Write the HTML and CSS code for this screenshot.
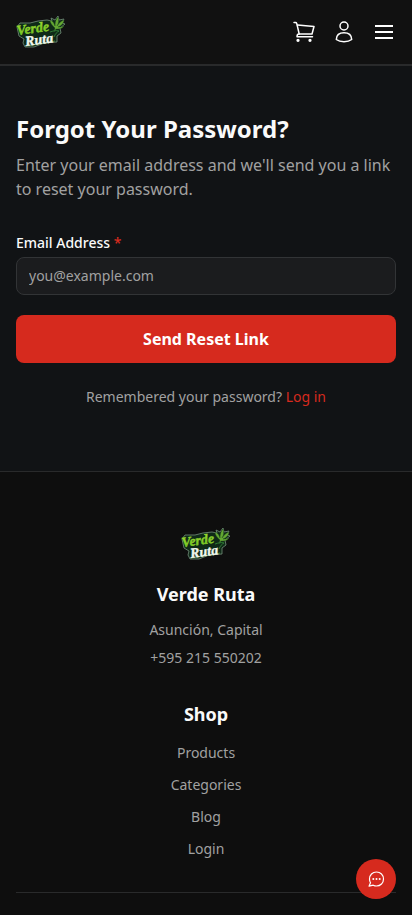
FILE: index.html
```html
<!DOCTYPE html>
<html lang="en">
<head>
<meta charset="utf-8">
<meta name="viewport" content="width=device-width, initial-scale=1">
<title>Forgot Your Password? - Verde Ruta</title>
<link rel="stylesheet" href="styles.css">
</head>
<body>
<svg class="defs" width="0" height="0" aria-hidden="true">
  <defs>
    <linearGradient id="leaf-green" x1="0" y1="0" x2="0" y2="1">
      <stop offset="0" stop-color="#a4dc35"/>
      <stop offset="1" stop-color="#5fbe1c"/>
    </linearGradient>
    <symbol id="logo" viewBox="0 0 50 32">
      <path d="M1 11 4 7 14 7 22 5 31 4 36 5 35 2 39 4 42 0 43 4 48 3 46 7 49 8 44 12 45 17 41 20 41 26 28 27 18 31 9 31 7 27 8 23 3 20Z" fill="#0f2a17" stroke="#75917c" stroke-width=".8" stroke-linejoin="round"/>
      <path d="M39 12C36 9 34 7 34 4c3 1 4 3 5 6 0-4 1-7 3-9 1 3 1 6-1 9 2-3 4-5 7-6 0 3-3 6-6 7 2 0 4 0 6-1-2 3-5 3-8 3l-2 3z" fill="#64a832" stroke="#234f20" stroke-width=".4"/>
      <path d="M34 16c3-1 6-2 9-1-2 1-4 3-5 6" fill="none" stroke="#2f7a35" stroke-width="1"/>
      <path d="M10 30c9-2 19-2 29-5" fill="none" stroke="#4d9a4f" stroke-width=".8"/>
      <g transform="rotate(-8 24 16)">
        <text class="logo-word" x="1" y="16" fill="url(#leaf-green)" stroke="#93d42c">Verde</text>
        <text class="logo-word" x="8" y="28" fill="#f1f7ee" stroke="#f1f7ee">Ruta</text>
      </g>
    </symbol>
  </defs>
</svg>

<header class="header">
  <a href="#" class="logo" aria-label="Verde Ruta"><svg width="50" height="32"><use href="#logo"/></svg></a>
  <nav class="header-nav">
    <a href="#" class="icon-link" aria-label="Cart">
      <svg width="24" height="24" viewBox="0 0 24 24" fill="none" stroke="currentColor" stroke-width="1.5" stroke-linecap="round" stroke-linejoin="round">
        <path d="M2 2.5h1.500c.6 0 1 .3 1.200.9L7.200 14"/>
        <path d="M5.500 5 22 6.500 20 14H7c-1.300 0-2 1-2 2.700h15.500"/>
        <circle cx="6" cy="20.300" r=".9" fill="currentColor"/>
        <circle cx="18" cy="20.300" r=".9" fill="currentColor"/>
      </svg>
    </a>
    <a href="#" class="icon-link" aria-label="Account">
      <svg width="24" height="24" viewBox="0 0 24 24" fill="none" stroke="currentColor" stroke-width="1.5">
        <circle cx="12" cy="6" r="4"/>
        <path d="M4.300 19.500C4.500 15.300 7.500 12.800 12 12.800s7.500 2.500 7.700 6.700c-2 1.500-4.500 2.200-7.700 2.200s-5.700-.7-7.700-2.200Z" stroke-linejoin="round"/>
      </svg>
    </a>
    <button type="button" class="icon-link" aria-label="Menu">
      <svg width="24" height="24" viewBox="0 0 24 24" fill="none" stroke="currentColor" stroke-width="2">
        <path d="M3 6h18M3 12h18M3 18h18"/>
      </svg>
    </button>
  </nav>
</header>

<main class="main">
  <h1 class="title">Forgot Your Password?</h1>
  <p class="intro">Enter your email address and we'll send you a link to reset your password.</p>
  <form class="reset-form">
    <label class="label" for="email">Email Address <span class="required">*</span></label>
    <input class="input" id="email" type="email" placeholder="you@example.com" required>
    <button class="submit" type="submit">Send Reset Link</button>
  </form>
  <p class="login">Remembered your password? <a href="#">Log in</a></p>
</main>

<footer class="footer">
  <svg class="footer-logo" width="50" height="32" role="img" aria-label="Verde Ruta"><use href="#logo"/></svg>
  <h2 class="footer-title">Verde Ruta</h2>
  <ul class="contact">
    <li>Asunción, Capital</li>
    <li>+595 215 550202</li>
  </ul>
  <h2 class="footer-title">Shop</h2>
  <ul class="shop-links">
    <li><a href="#">Products</a></li>
    <li><a href="#">Categories</a></li>
    <li><a href="#">Blog</a></li>
    <li><a href="#">Login</a></li>
  </ul>
  <div class="divider"></div>
</footer>

<button type="button" class="chat" aria-label="Chat">
  <svg width="20" height="20" viewBox="0 0 20 20" fill="none" stroke="currentColor" stroke-width="1.200" stroke-linejoin="round">
    <path d="M10.500 3C14.500 3 17.500 6 17.500 10s-3 7-7 7c-1.200 0-2.300-.3-3.300-.8L3 17.200l1.500-3.400C3.800 12.700 3.500 11.400 3.500 10c0-4 3-7 7-7Z"/>
    <g fill="currentColor" stroke="none"><circle cx="7.300" cy="10" r="1"/><circle cx="10.500" cy="10" r="1"/><circle cx="13.700" cy="10" r="1"/></g>
  </svg>
</button>
</body>
</html>
```
FILE: styles.css
```css
* {
	box-sizing:border-box;
}
body, h1, h2, p, ul {
	margin:0;
	padding:0;
}
body {
	display:flex;
	flex-direction:column;
	min-height:100vh;
	background:#111315;
	color:#fafafa;
	font:14px/20px "Noto Sans", sans-serif;
}
a {
	color:inherit;
	text-decoration:none;
}
ul {
	list-style:none;
}
svg {
	display:block;
}
button {
	border:0;
	font-family:inherit;
	cursor:pointer;
}
.defs {
	position:absolute;
}
.logo-word {
	font:italic 700 14px "Liberation Serif", serif;
	stroke-width:.4px;
}

/* header */
.header {
	display:flex;
	align-items:center;
	justify-content:space-between;
	height:66px;
	padding:0 16px;
	background:#111;
	border-bottom:2px solid #292a2b;
}
.header-nav {
	display:flex;
	gap:16px;
}
.icon-link {
	padding:0;
	background:none;
	color:#fff;
}

/* reset form */
.main {
	padding:47px 16px 64px;
}
.title {
	margin-bottom:8px;
	font-size:24px;
	line-height:32px;
}
.intro {
	margin-bottom:32px;
	color:#a1a1a1;
	font-size:16px;
	line-height:24px;
}
.label {
	display:block;
	margin-bottom:4px;
	font-weight:500;
}
.required {
	color:#d92b1f;
}
.input {
	display:block;
	width:100%;
	height:38px;
	margin-bottom:20px;
	padding:0 12px 2px;
	border:1px solid #323436;
	border-radius:8px;
	background:#1b1c1e;
	color:#fafafa;
	font:inherit;
}
.input::placeholder {
	color:#a1a1a1;
}
.submit {
	width:100%;
	height:48px;
	margin-bottom:24px;
	border-radius:8px;
	background:#d62a1e;
	color:#fff;
	font-size:16px;
	font-weight:700;
}
.login {
	color:#a1a1a1;
	text-align:center;
}
.login a {
	color:#d62a1e;
}

/* footer */
.footer {
	flex:1;
	padding:56px 16px 16px;
	background:#0e0e0e;
	border-top:1px solid #292a2b;
	color:#a1a1a1;
	text-align:center;
}
.footer-logo {
	margin:0 auto 20px;
}
.footer-title {
	color:#fafafa;
	font-size:18px;
	line-height:28px;
}
.contact {
	display:grid;
	gap:8px;
	margin:12px 0 32px;
}
.shop-links {
	display:grid;
	gap:12px;
	margin:15px 0 33px;
}
.divider {
	border-top:1px solid #292a2b;
}

.chat {
	position:fixed;
	right:16px;
	bottom:16px;
	display:flex;
	align-items:center;
	justify-content:center;
	width:40px;
	height:40px;
	padding:0;
	border-radius:50%;
	background:#d62a1e;
	color:#fff;
}
```
